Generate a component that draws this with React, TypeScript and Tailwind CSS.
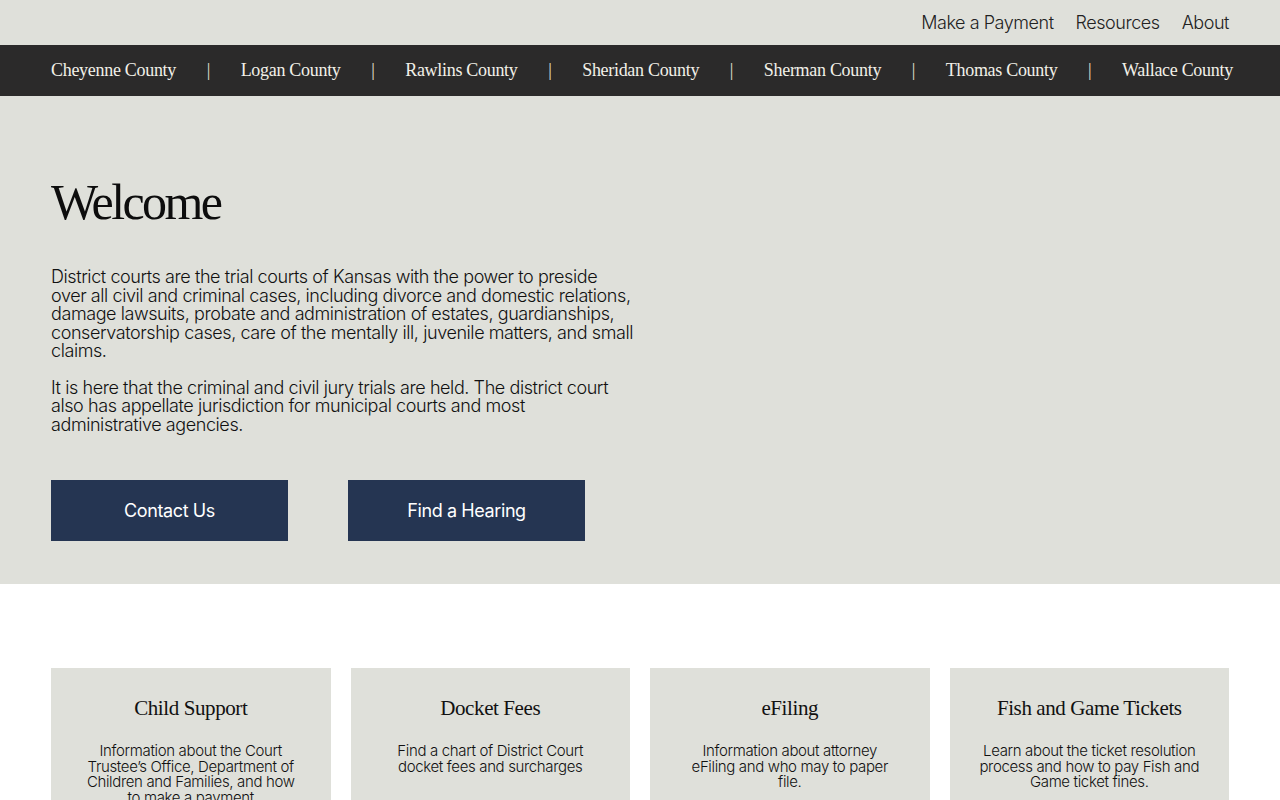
import React from 'react';

const counties = [
  'Cheyenne County',
  'Logan County',
  'Rawlins County',
  'Sheridan County',
  'Sherman County',
  'Thomas County',
  'Wallace County',
];

const cards = [
  {
    title: 'Child Support',
    text: 'Information about the Court Trustee’s Office, Department of Children and Families, and how to make a payment',
  },
  { title: 'Docket Fees', text: 'Find a chart of District Court docket fees and surcharges' },
  { title: 'eFiling', text: 'Information about attorney eFiling and who may to paper file.' },
  {
    title: 'Fish and Game Tickets',
    text: 'Learn about the ticket resolution process and how to pay Fish and Game ticket fines.',
  },
];

const sans = "font-['Inter','Liberation_Sans',sans-serif]";
const serif = "font-['Liberation_Serif','DejaVu_Serif',serif]";

export default function App() {
  return (
    <div className={`${sans} min-h-screen bg-white text-[#111]`}>
      <div className="bg-[#dfe0da]">
        <div className="flex h-[45px] items-center justify-end gap-[22px] px-[51px] text-[18px] font-light tracking-[-0.45px] text-[#222]">
          <a href="#">Make a Payment</a>
          <a href="#">Resources</a>
          <a href="#">About</a>
        </div>
      </div>

      <nav className="bg-[#2b2a2a]">
        <div className={`${serif} flex h-[51px] items-center justify-between pl-[51px] pr-[47px] text-[18px] tracking-[-0.3px] text-[#f2f0e8]`}>
          {counties.map((c, i) => (
            <React.Fragment key={c}>
              {i > 0 && <span className="text-[#e4e0d2]">|</span>}
              <a href="#">{c}</a>
            </React.Fragment>
          ))}
        </div>
      </nav>

      <section className="bg-[#dfe0da] px-[51px] pt-[81px] pb-[43px]">
        <div className="w-[582px]">
          <h1 className={`${serif} text-[50px] leading-none tracking-[-2.6px] text-[#0d0d0d]`}>Welcome</h1>
          <p className="mt-[41px] text-[18px] font-light leading-[18.5px] tracking-[-0.42px]">
            District courts are the trial courts of Kansas with the power to preside over all civil and criminal cases,
            including divorce and domestic relations, damage lawsuits, probate and administration of estates,
            guardianships, conservatorship cases, care of the mentally ill, juvenile matters, and small claims.
          </p>
          <p className="mt-[18px] text-[18px] font-light leading-[18.5px] tracking-[-0.42px]">
            It is here that the criminal and civil jury trials are held. The district court also has appellate
            jurisdiction for municipal courts and most administrative agencies.
          </p>
          <div className="mt-[46px] flex gap-[60px]">
            <a href="#" className="flex h-[61px] w-[237px] items-center justify-center bg-[#253552] text-[18px] tracking-[-0.4px] text-white">
              Contact Us
            </a>
            <a href="#" className="flex h-[61px] w-[237px] items-center justify-center bg-[#253552] text-[18px] tracking-[-0.4px] text-white">
              Find a Hearing
            </a>
          </div>
        </div>
      </section>

      <section className="px-[51px] pt-[84px] pb-[40px]">
        <div className="grid grid-cols-4 gap-[20px]">
          {cards.map((c) => (
            <div key={c.title} className="h-[200px] bg-[#dfe0da] px-[29px] pt-[28px] text-center">
              <h2 className={`${serif} text-[21px] leading-[24px] tracking-[-0.4px] text-[#111]`}>{c.title}</h2>
              <p className="mt-[23px] text-[15px] font-light leading-[15.5px] tracking-[-0.35px] text-[#111]">{c.text}</p>
            </div>
          ))}
        </div>
      </section>
    </div>
  );
}
